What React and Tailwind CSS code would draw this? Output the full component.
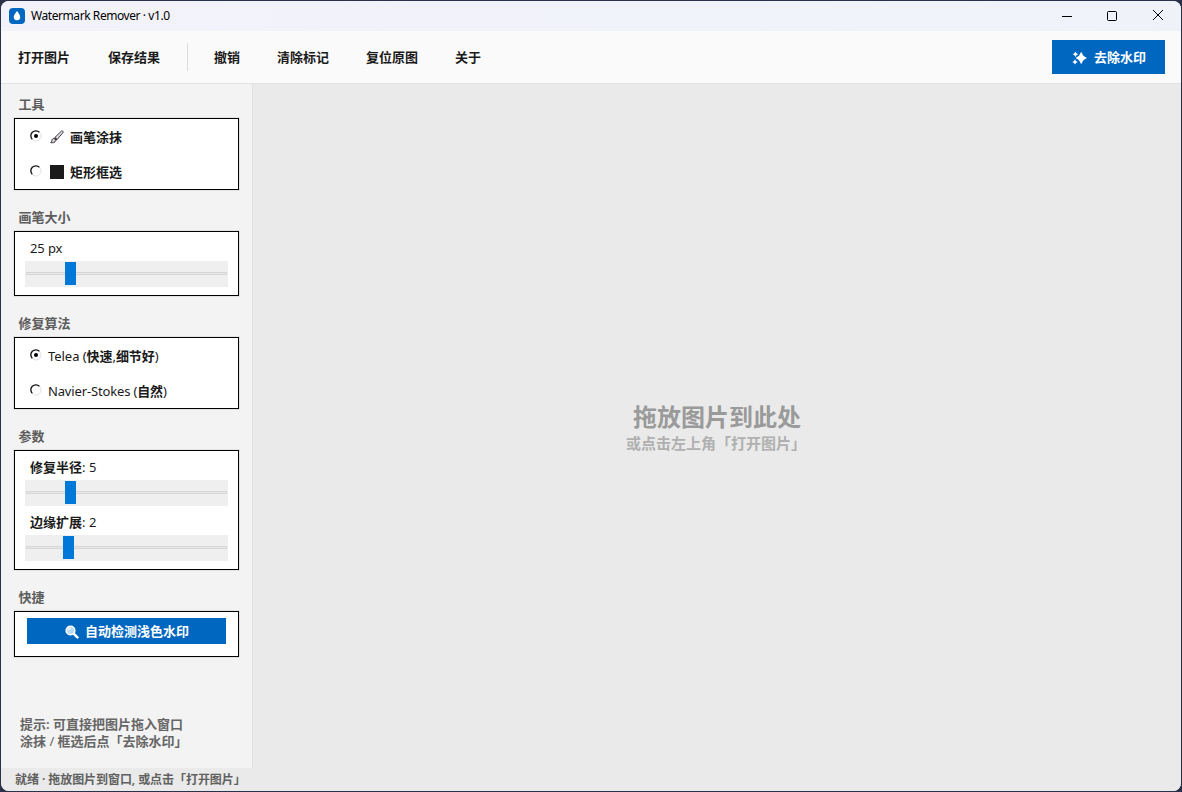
import React, { useState } from 'react';
import clsx from 'clsx';

const BrushIcon = () => (
  <svg width="14" height="14" viewBox="0 0 14 14" fill="none">
    <path d="M5 7.400 11.300 1.200c1-.9 2.500.3 1.700 1.400L7.200 9.400Z" fill="#dcdce2" stroke="#3c3c44" />
    <path d="M4.800 7.200 7.300 9.500 6 10.800 3.600 8.600Z" fill="#3c2f2f" />
    <path d="M4.400 8.600c-1.800-.4-2.400.8-2.600 2-.1 1-.6 1.600-1.200 2 2 .6 4.800 0 5.200-2.400Z" fill="#d8d0d0" stroke="#3c3c44" />
  </svg>
);

const SparkleIcon = () => (
  <svg width="15" height="14" viewBox="0 0 15 14" fill="#fff">
    <path d="M9.200 .8 11.400 4.800 14.800 7 11.400 9.200 9.200 13.200 7 9.200 3.600 7 7 4.800Z" />
    <path d="M3.400 .6 4.400 2.300 6.200 3.200 4.400 4.200 3.400 5.900 2.400 4.200 .8 3.200 2.400 2.300Z" />
    <path d="M3 8.200 4 10 5.600 11 4 12 3 13.600 2 12 .4 11 2 10Z" />
  </svg>
);

const SearchIcon = () => (
  <svg width="14" height="14" viewBox="0 0 14 14" fill="none">
    <path d="m8.600 8.600 3.800 3.800" stroke="#fff" strokeWidth="2.600" strokeLinecap="round" />
    <circle cx="5.500" cy="5.500" r="4.300" fill="#b9dcf5" stroke="#fff" strokeWidth="1.600" />
    <path d="M3.200 5.200c.2-1.200 1-2 2.200-2.100" stroke="#fff" strokeWidth="1.200" />
  </svg>
);

const AppIcon = () => (
  <svg width="16" height="16" viewBox="0 0 16 16">
    <rect width="16" height="16" rx="4" fill="#0067c0" />
    <path d="M8 3c1.500 2.200 3.200 3.900 3.200 6.100a3.200 3.200 0 0 1-6.400 0C4.800 6.900 6.500 5.200 8 3Z" fill="#fff" />
  </svg>
);

const RadioDot = ({ checked }) => (
  <svg width="12" height="12" viewBox="0 0 12 12" fill="none" className="shrink-0">
    <circle cx="6" cy="6" r="5" fill="#fff" stroke="#e2e2e2" />
    <path d="M2.300 9.400A5 5 0 0 1 9.400 2.300" stroke="#111" strokeWidth="1.300" />
    {checked && <circle cx="6" cy="6" r="2" fill="#000" />}
  </svg>
);

const Section = ({ title, children, className }) => (
  <section>
    <h3 className="h-[27px] pl-[4.500px] leading-[27px] text-[13px] font-bold text-[#5c5c5c]">{title}</h3>
    <div className={clsx('bg-white border border-black outline outline-[#e2e2e2]', className)}>{children}</div>
  </section>
);

const Radio = ({ checked, onClick, children }) => (
  <button onClick={onClick} className="flex h-[35px] w-full items-center pl-[15px] text-[13px] leading-[18px]">
    <span className="mr-[6px] -mt-px flex">
      <RadioDot checked={checked} />
    </span>
    {children}
  </button>
);

const Slider = ({ percent }) => (
  <div className="relative mx-[10px] h-[26px] bg-[#efefef] px-px pt-[11px]">
    <div className="h-[3px] w-full border border-[#d6d6d6] bg-[#e8e8e8]" />
    <div className="absolute top-px h-[23px] w-[11px] bg-[#0078d7]" style={{ left: `${percent}%` }} />
  </div>
);

const menuItems = ['撤销', '清除标记', '复位原图', '关于'];

const App = () => {
  const [tool, setTool] = useState('brush');
  const [algo, setAlgo] = useState('telea');

  return (
    <div className="h-[792px] w-[1182px] bg-[#2b3148] p-px font-['Noto_Sans','Noto_Sans_CJK_SC',sans-serif] text-[#1a1a1a]">
      <div className="flex h-full flex-col overflow-hidden rounded-lg bg-[#f3f3f3]">
        {/* Title bar */}
        <header className="flex h-[30px] shrink-0 items-center bg-linear-to-r from-[#f3f2fa] to-[#eff3f9] pl-2">
          <AppIcon />
          <span className="ml-[6px] text-[12px] tracking-[-0.430px] text-black">Watermark Remover · v1.0</span>
          <div className="ml-auto flex text-black">
            <div className="flex h-[30px] w-[45px] items-center justify-center">
              <svg width="10" height="10" stroke="currentColor"><path d="M0 5.500h10" /></svg>
            </div>
            <div className="flex h-[30px] w-[45px] items-center justify-center">
              <svg width="10" height="10" fill="none" stroke="currentColor"><rect x=".5" y=".5" width="9" height="9" rx="1" /></svg>
            </div>
            <div className="flex h-[28px] w-[47px] items-center justify-center">
              <svg width="10" height="10" stroke="currentColor"><path d="m0 0 10 10M10 0 0 10" /></svg>
            </div>
          </div>
        </header>

        {/* Toolbar */}
        <div className="flex h-[53px] shrink-0 items-center border-b border-[#e3e3e3] bg-[#fafafa] pl-[17px] pr-4 text-[13px] font-bold">
          <div className="flex gap-[38px] pt-px">
            <span>打开图片</span>
            <span>保存结果</span>
          </div>
          <div className="ml-[27px] mr-[26px] h-7 w-px bg-[#dcdcdc]" />
          <div className="flex gap-[37px] pt-px">
            {menuItems.map((item) => (
              <span key={item}>{item}</span>
            ))}
          </div>
          <button className="ml-auto flex h-[34px] w-[113px] items-center justify-center gap-[7px] bg-[#0067c0] pl-px pt-px text-white">
            <SparkleIcon />
            <span>去除水印</span>
          </button>
        </div>

        <div className="flex min-h-0 flex-1">
          {/* Sidebar */}
          <aside className="flex w-[252px] shrink-0 flex-col gap-[14px] border-r border-[#e0e0e0] pl-[13px] pr-[13px] pt-[7px]">
            <Section title="工具" className="h-[72px]">
              <Radio checked={tool === 'brush'} onClick={() => setTool('brush')}>
                <span className="ml-[2px] mr-[6px]"><BrushIcon /></span>
                <span className="font-bold">画笔涂抹</span>
              </Radio>
              <Radio checked={tool === 'rect'} onClick={() => setTool('rect')}>
                <span className="ml-[2px] mr-[6px] size-[14px] bg-[#1a1a1a]" />
                <span className="font-bold">矩形框选</span>
              </Radio>
            </Section>

            <Section title="画笔大小" className="h-[65px]">
              <div className="h-[29px] pl-[15px] text-[13px] leading-[32px] tracking-[-0.1px]">25 px</div>
              <Slider percent={19.700} />
            </Section>

            <Section title="修复算法" className="h-[72px]">
              <Radio checked={algo === 'telea'} onClick={() => setAlgo('telea')}>
                <span className="tracking-[-0.050px]">Telea (<b>快速</b>,<b>细节好</b>)</span>
              </Radio>
              <Radio checked={algo === 'ns'} onClick={() => setAlgo('ns')}>
                <span className="tracking-[-0.150px]">Navier-Stokes (<b>自然</b>)</span>
              </Radio>
            </Section>

            <Section title="参数" className="h-[120px]">
              <div className="h-[29px] pl-[15px] text-[13px] leading-[32px]"><b>修复半径</b>: 5</div>
              <Slider percent={19.700} />
              <div className="h-[29px] pl-[15px] text-[13px] leading-[32px]"><b>边缘扩展</b>: 2</div>
              <Slider percent={18.700} />
            </Section>

            <Section title="快捷" className="h-[46px] px-3 pt-[6px]">
              <button className="flex h-[26px] w-full items-center justify-center gap-[6px] bg-[#0067c0] pt-px pl-px text-[13px] font-bold text-white">
                <SearchIcon />
                <span>自动检测浅色水印</span>
              </button>
            </Section>

            <p className="mt-auto mb-[18px] pl-[6px] text-[13px] font-semibold leading-[17px] text-[#666]">
              提示: 可直接把图片拖入窗口
              <br />
              涂抹 <span className="font-normal">/</span> 框选后点「去除水印」
            </p>
          </aside>

          {/* Canvas */}
          <main className="flex flex-1 flex-col items-center justify-center bg-[#eaeaea] pt-[7px]">
            <p className="text-2xl font-bold leading-[28px] text-[#9a9a9a]">拖放图片到此处</p>
            <p className="mr-[2px] text-[15px] font-semibold leading-[25px] text-[#b0b0b0]">或点击左上角「打开图片」</p>
          </main>
        </div>

        {/* Status bar */}
        <footer className="h-[23px] shrink-0 bg-[#eaeaea] pl-[14px] pt-px text-[12px] font-semibold leading-[22px] tracking-[-0.060px] text-[#606060]">
          就绪 · 拖放图片到窗口, 或点击「打开图片」
        </footer>
      </div>
    </div>
  );
};

export default App;
